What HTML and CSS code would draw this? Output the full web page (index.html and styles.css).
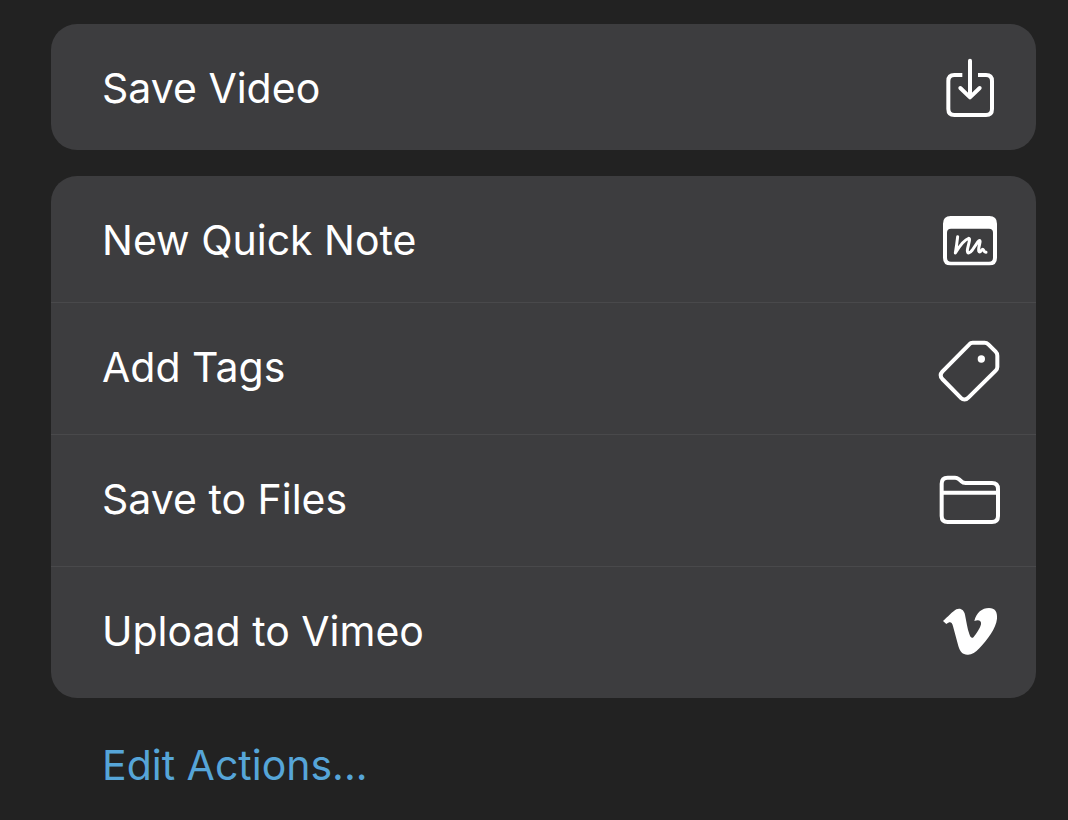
FILE: index.html
```html
<!DOCTYPE html>
<html lang="en">
<head>
<meta charset="utf-8">
<meta name="viewport" content="width=device-width, initial-scale=1">
<title>Share actions</title>
<link rel="stylesheet" href="styles.css">
</head>
<body>
<main class="sheet">
  <section class="group">
    <button class="action" type="button">
      <span class="label">Save Video</span>
      <svg class="icon" viewBox="0 -6 240 240" aria-hidden="true">
        <g class="line">
          <path stroke-linecap="butt" d="M97 75H73Q55 75 55 93V177Q55 195 73 195H168Q186 195 186 177V93Q186 75 168 75H144"/>
          <path stroke-linecap="round" d="M120 32V142M91 114L120 142L149 114"/>
        </g>
      </svg>
    </button>
  </section>
  <section class="group">
    <button class="action" type="button">
      <span class="label">New Quick Note</span>
      <svg class="icon" viewBox="0 -2 240 240" aria-hidden="true">
        <path class="solid" fill-rule="evenodd" d="M62 46H178Q201 46 201 69V171Q201 194 178 194H62Q39 194 39 171V69Q39 46 62 46ZM63 84Q51 84 51 96V171Q51 183 63 183H177Q189 183 189 171V96Q189 84 177 84Z"/>
        <path class="line pen" stroke-linecap="round" d="M83 108Q80 134 76 157C87 139 103 117 116 113C123 113 113 136 112 149C112 162 120 157 127 148L144 123C150 116 152 121 149 130C146 141 144 154 149 154C153 154 155 145 159 146C162 147 162 156 168 155"/>
      </svg>
    </button>
    <button class="action tall" type="button">
      <span class="label">Add Tags</span>
      <svg class="icon" viewBox="0 -9 240 240" aria-hidden="true">
        <path class="line" d="M128 38H164Q170 38 175 43L197 65Q202 70 202 77V111Q202 117 197 122L115 203Q104 214 92 203L37 147Q27 136 37 125L118 43Q122 38 128 38Z"/>
        <circle class="solid" cx="154" cy="87" r="11"/>
      </svg>
    </button>
    <button class="action tall" type="button">
      <span class="label">Save to Files</span>
      <svg class="icon" viewBox="0 -3 240 240" aria-hidden="true">
        <g class="line">
          <path d="M53 53H75Q81 53 87 58L94 64Q99 69 107 69H186Q204 69 204 87V168Q204 186 186 186H53Q35 186 35 168V71Q35 53 53 53Z"/>
          <path d="M36 98H203"/>
        </g>
      </svg>
    </button>
    <button class="action tall" type="button">
      <span class="label">Upload to Vimeo</span>
      <svg class="icon" viewBox="0 -3 240 240" aria-hidden="true">
        <path class="solid" d="M39 87C52 76 68 58 79 52C92 47 102 54 105 68C109 87 112 110 118 126C122 138 126 140 131 135C140 125 151 107 153 97C155 84 144 83 133 87C139 62 156 48 177 48C195 48 203 60 201 80C198 110 172 142 148 169C136 182 124 189 112 188C98 188 90 179 85 162L69 103C66 91 61 87 49 96Z"/>
      </svg>
    </button>
  </section>
  <a class="edit" href="#">Edit Actions...</a>
</main>
</body>
</html>
```
FILE: styles.css
```css
* {
  box-sizing: border-box;
}

body {
  margin: 0;
  min-height: 100vh;
  background: #222222;
  color: #ffffff;
  font: 400 41px/52px Inter, "Liberation Sans", sans-serif;
}

.sheet {
  display: flex;
  flex-direction: column;
  gap: 26px;
  padding: 24px 32px 24px 51px;
}

.group {
  display: flex;
  flex-direction: column;
  overflow: hidden;
  border-radius: 26px;
  background: #3d3d3f;
}

.action {
  display: flex;
  align-items: center;
  justify-content: space-between;
  min-height: 126px;
  padding: 2px 26px 0 51px;
  border: 0;
  background: none;
  color: inherit;
  font: inherit;
  text-align: left;
  cursor: pointer;
}

.tall {
  min-height: 132px;
  padding-top: 0;
  padding-bottom: 3px;
  border-top: 1px solid #49494b;
}

.icon {
  flex: none;
  width: 80px;
  height: 80px;
}

.line {
  fill: none;
  stroke: #ffffff;
  stroke-width: 12;
  stroke-linejoin: round;
}

.pen {
  stroke-width: 9;
}

.solid {
  fill: #ffffff;
}

.edit {
  align-self: flex-start;
  margin: 15px 0 0 51px;
  color: #56a5d8;
  text-decoration: none;
}
```
